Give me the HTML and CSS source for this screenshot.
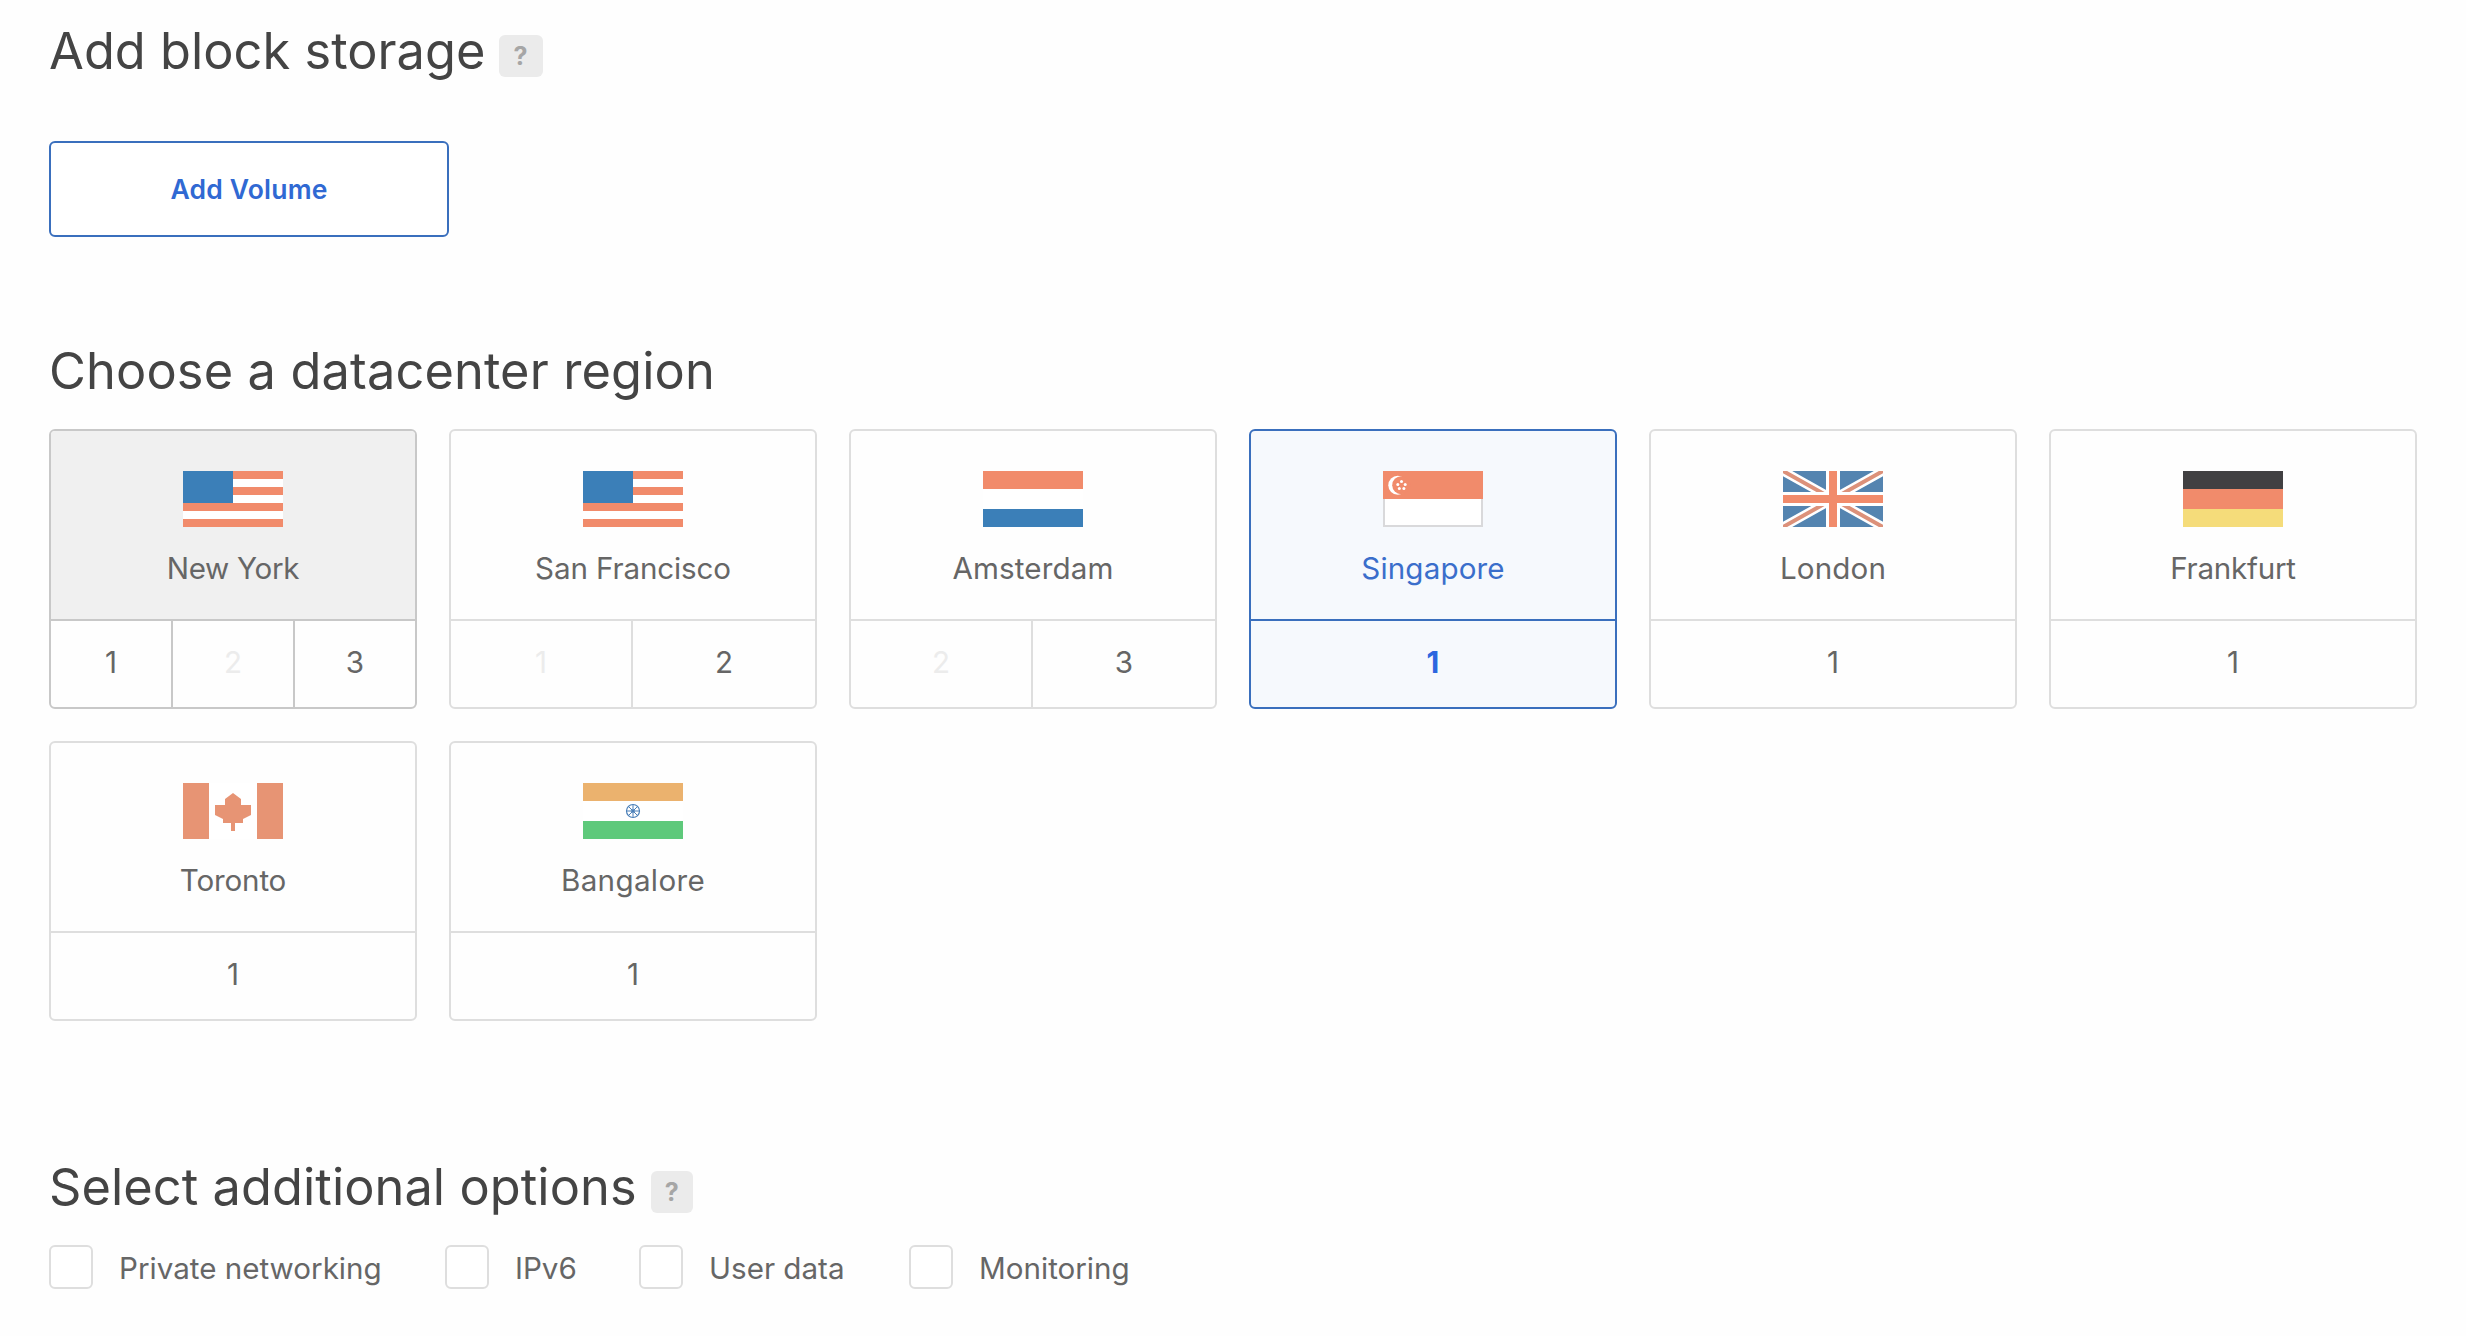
FILE: index.html
```html
<!DOCTYPE html>
<html lang="en">
<head>
<meta charset="utf-8">
<title>Create Droplet</title>
<link rel="stylesheet" href="styles.css">
</head>
<body>
<svg class="defs" width="0" height="0" aria-hidden="true">
  <symbol id="flag-us" viewBox="0 0 100 56">
    <path fill="#fff" d="M0 0h100v56H0z"/>
    <path fill="#f18b6b" d="M0 0h100v8H0zM0 16h100v8H0zM0 32h100v8H0zM0 48h100v8H0z"/>
    <path fill="#3b7fb8" d="M0 0h50v32H0z"/>
  </symbol>
</svg>
<main class="page">
  <section class="section storage">
    <h2 class="title title-storage">Add block storage <span class="help">?</span></h2>
    <button class="add-volume" type="button">Add Volume</button>
  </section>

  <section class="section regions">
    <h2 class="title title-regions">Choose a datacenter region</h2>
    <div class="region-grid">
      <div class="region hovered">
        <div class="region-main">
          <svg class="flag" viewBox="0 0 100 56"><use href="#flag-us"/></svg>
          <div class="name new-york">New York</div>
        </div>
        <div class="zones three"><span class="zone">1</span><span class="zone disabled">2</span><span class="zone">3</span></div>
      </div>
      <div class="region">
        <div class="region-main">
          <svg class="flag" viewBox="0 0 100 56"><use href="#flag-us"/></svg>
          <div class="name san-francisco">San Francisco</div>
        </div>
        <div class="zones two"><span class="zone disabled">1</span><span class="zone">2</span></div>
      </div>
      <div class="region">
        <div class="region-main">
          <svg class="flag" viewBox="0 0 100 56"><path fill="#f18b6b" d="M0 0h100v18H0z"/><path fill="#fff" d="M0 18h100v20H0z"/><path fill="#3b7fb8" d="M0 38h100v18H0z"/></svg>
          <div class="name amsterdam">Amsterdam</div>
        </div>
        <div class="zones two"><span class="zone disabled">2</span><span class="zone">3</span></div>
      </div>
      <div class="region selected">
        <div class="region-main">
          <svg class="flag" viewBox="0 0 100 56">
            <path fill="#fff" stroke="#d9d9db" stroke-width="2" d="M1 1h98v54H1z"/>
            <path fill="#f18b6b" d="M0 0h100v28H0z"/>
            <circle cx="14.8" cy="14.2" r="9.5" fill="#fff"/>
            <circle cx="18.2" cy="14.2" r="9" fill="#f18b6b"/>
            <g fill="#fff"><circle cx="18.5" cy="10.5" r="1.5"/><circle cx="14.8" cy="13.4" r="1.5"/><circle cx="22.2" cy="13.4" r="1.5"/><circle cx="16.3" cy="17.5" r="1.5"/><circle cx="20.9" cy="17.5" r="1.5"/></g>
          </svg>
          <div class="name singapore">Singapore</div>
        </div>
        <div class="zones"><span class="zone">1</span></div>
      </div>
      <div class="region">
        <div class="region-main">
          <svg class="flag" viewBox="0 0 100 56">
            <path fill="#5484b0" d="M0 0h100v56H0z"/>
            <path stroke="#fff" stroke-width="9" d="M-4-2.24 104 58.24M104-2.24-4 58.24"/>
            <path stroke="#dc917a" stroke-width="4" d="M-4-2.24 104 58.24M104-2.24-4 58.24"/>
            <path fill="#fff" d="M43 0h14v56H43zM0 21h100v14H0z"/>
            <path fill="#f18b6b" d="M46 0h8v56h-8zM0 24h100v8H0z"/>
          </svg>
          <div class="name london">London</div>
        </div>
        <div class="zones"><span class="zone">1</span></div>
      </div>
      <div class="region">
        <div class="region-main">
          <svg class="flag" viewBox="0 0 100 56"><path fill="#414042" d="M0 0h100v18H0z"/><path fill="#f18b6b" d="M0 18h100v20H0z"/><path fill="#f5dc7a" d="M0 38h100v18H0z"/></svg>
          <div class="name frankfurt">Frankfurt</div>
        </div>
        <div class="zones"><span class="zone">1</span></div>
      </div>
      <div class="region">
        <div class="region-main">
          <svg class="flag" viewBox="0 0 100 56"><path fill="#fff" d="M0 0h100v56H0z"/><path fill="#e79474" d="M0 0h26v56H0zM74 0h26v56H74zM50 10l8 6v6h10v10l-8 4v4h-8v8h-4v-8h-8v-4l-8-4V22h10v-6z"/></svg>
          <div class="name toronto">Toronto</div>
        </div>
        <div class="zones"><span class="zone">1</span></div>
      </div>
      <div class="region">
        <div class="region-main">
          <svg class="flag" viewBox="0 0 100 56">
            <path fill="#ebb26e" d="M0 0h100v18H0z"/><path fill="#fff" d="M0 18h100v20H0z"/><path fill="#5ec97b" d="M0 38h100v18H0z"/>
            <g stroke="#4a7fb8" fill="none"><circle cx="50" cy="28" r="6.5" stroke-width="1.2"/><path stroke-width="1" d="M50 21.5v13M43.5 28h13M45.4 23.4l9.2 9.2M54.6 23.4l-9.2 9.2"/></g>
            <circle cx="50" cy="28" r="1.8" fill="#4a7fb8"/>
          </svg>
          <div class="name bangalore">Bangalore</div>
        </div>
        <div class="zones"><span class="zone">1</span></div>
      </div>
    </div>
  </section>

  <section class="section options">
    <h2 class="title title-options">Select additional options <span class="help">?</span></h2>
    <div class="option-row">
      <label class="option"><span class="box"></span><span class="text">Private networking</span></label>
      <label class="option"><span class="box"></span><span class="text">IPv6</span></label>
      <label class="option"><span class="box"></span><span class="text">User data</span></label>
      <label class="option"><span class="box"></span><span class="text">Monitoring</span></label>
    </div>
  </section>
</main>
</body>
</html>
```
FILE: styles.css
```css
* {
  box-sizing: border-box;
}

body {
  margin: 0;
  background: #fefefe;
  color: #666;
  font-family: Inter, "Liberation Sans", sans-serif;
  font-size: 29.6px;
  line-height: 40px;
}

.defs {
  display: none;
}

.page {
  padding: 21px 49px 0;
}

.storage {
  margin-bottom: 104px;
}

.regions {
  margin-bottom: 136px;
}

.title {
  display: flex;
  align-items: flex-start;
  gap: 14px;
  margin: 0 0 28px;
  color: #444;
  font-size: 50.5px;
  font-weight: 400;
  line-height: 60px;
}

.title-storage {
  gap: 13px;
  margin-bottom: 60px;
  letter-spacing: 0.04px;
}

.title-regions {
  letter-spacing: 0.14px;
}

.title-options {
  letter-spacing: 0.07px;
}

.help {
  width: 42px;
  height: 42px;
  margin-top: 14px;
  border-radius: 6px;
  background: #ebebeb;
  color: #a6a6a6;
  font-size: 25px;
  font-weight: 700;
  line-height: 42px;
  text-align: center;
}

.title-storage .help {
  width: 44px;
}

.add-volume {
  display: block;
  width: 400px;
  height: 96px;
  padding: 0;
  border: 2px solid #3a6fbd;
  border-radius: 6px;
  background: #fff;
  color: #3069d3;
  font-family: inherit;
  font-size: 26.5px;
  font-weight: 600;
  letter-spacing: 0.2px;
}

.region-grid {
  display: grid;
  grid-template-columns: repeat(6, 368px);
  gap: 32px;
}

.region {
  --line: #dedede;
  height: 280px;
  overflow: hidden;
  border: 2px solid var(--line);
  border-radius: 6px;
  text-align: center;
}

.region-main {
  height: 190px;
  padding-top: 40px;
  border-bottom: 2px solid var(--line);
}

.flag {
  display: block;
  width: 100px;
  height: 56px;
  margin: 0 auto 21px;
}

.zones {
  display: grid;
  height: 86px;
}

.zones.two {
  grid-template-columns: 182px 182px;
}

.zones.three {
  grid-template-columns: 122px 122px 120px;
}

.zone {
  padding-top: 21px;
}

.zone:not(:last-child) {
  border-right: 2px solid var(--line);
}

.zone.disabled {
  color: #ececec;
}

.hovered {
  --line: #c8c8c8;
}

.hovered .region-main {
  background: #f0f0f0;
}

.selected {
  --line: #3a6fbd;
  background: #f6f9fd;
  color: #3a6ecb;
}

.selected .zone {
  color: #2c67df;
  font-weight: 700;
}

.new-york {
  letter-spacing: -0.3px;
}

.san-francisco {
  letter-spacing: -0.14px;
}

.amsterdam,
.singapore,
.london {
  letter-spacing: 0.14px;
}

.frankfurt {
  letter-spacing: -0.25px;
}

.toronto {
  letter-spacing: -0.17px;
}

.bangalore {
  letter-spacing: 0.34px;
}

.option-row {
  display: grid;
  grid-template-columns: 396px 194px 270px auto;
}

.option {
  display: flex;
  align-items: center;
  gap: 26px;
}

.box {
  width: 44px;
  height: 44px;
  border: 2px solid #dedede;
  border-radius: 6px;
  background: #fff;
}

.text {
  padding-top: 2px;
}
```
